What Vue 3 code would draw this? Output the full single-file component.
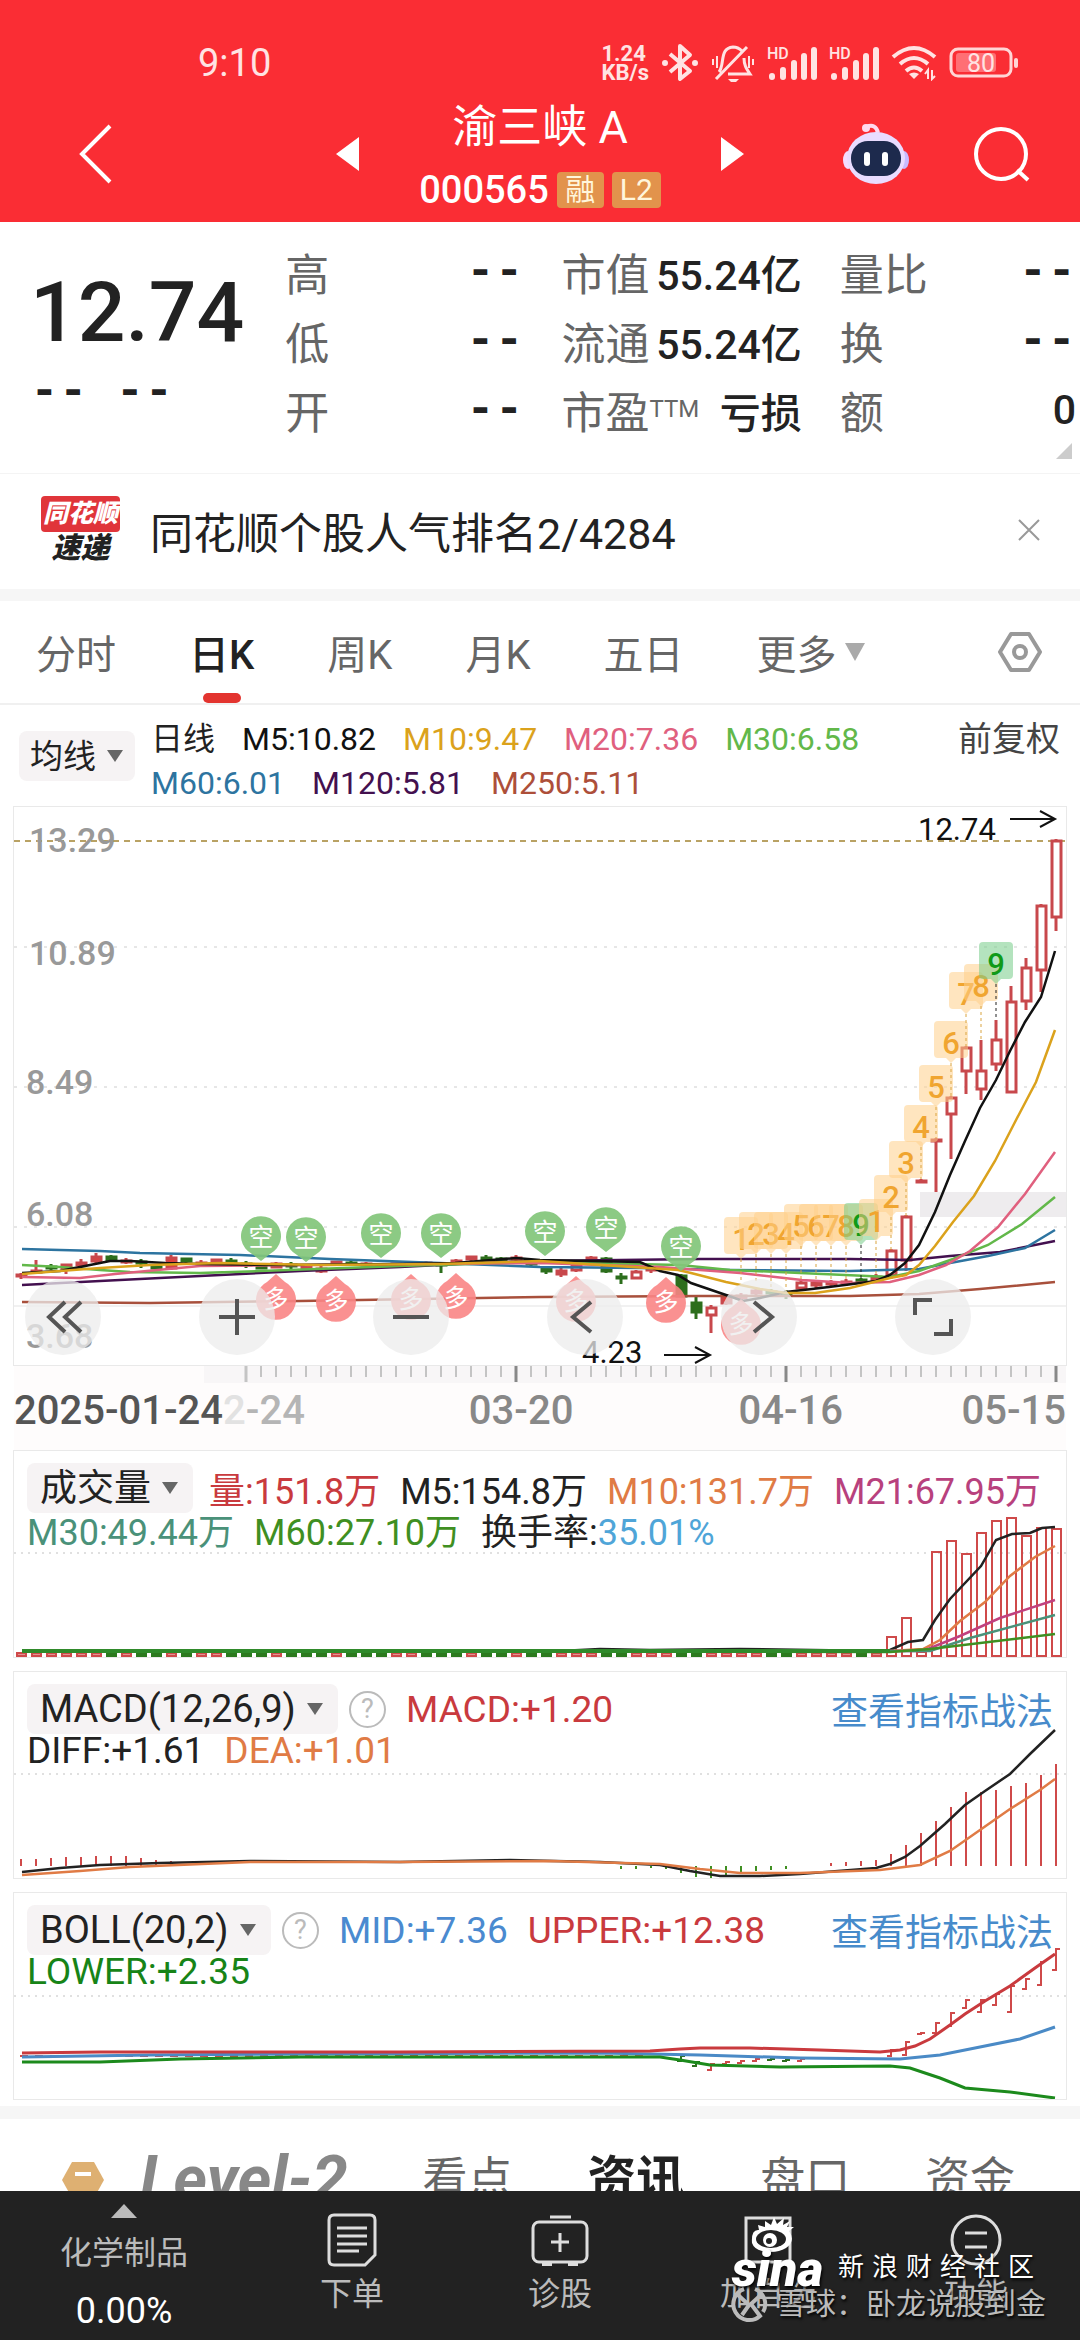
<script setup>
import { ref } from 'vue';

/**
 * Rows of the quote header, grouped by column.
 */
const quoteColumns = [
  [
    { label: '高', value: '--' },
    { label: '低', value: '--' },
    { label: '开', value: '--' },
  ],
  [
    { label: '市值', value: '55.24亿' },
    { label: '流通', value: '55.24亿' },
    { label: '市盈', sup: 'TTM', value: '亏损' },
  ],
  [
    { label: '量比', value: '--' },
    { label: '换', value: '--' },
    { label: '额', value: '0' },
  ],
];

const periods = ['分时', '日K', '周K', '月K', '五日'];
const activePeriod = ref('日K');

const maValues = [
  [
    { text: '日线', color: '#222222' },
    { text: 'M5:10.82', color: '#111111' },
    { text: 'M10:9.47', color: '#dba21c' },
    { text: 'M20:7.36', color: '#e0607e' },
    { text: 'M30:6.58', color: '#62b84a' },
  ],
  [
    { text: 'M60:6.01', color: '#2d74a0' },
    { text: 'M120:5.81', color: '#43104f' },
    { text: 'M250:5.11', color: '#ad4f3a' },
  ],
];

// x position of a trading day, 70 days are drawn
const dayX = (index) => 21 + index * 15;

/**
 * Candles as [day, open/close top, open/close bottom, high, low, kind].
 * kind: r = hollow red, f = filled red, g = filled green
 */
const candles = [
  [0, 1274, 1277, 1273, 1279, 'f'], [1, 1270, 1273, 1260, 1273, 'f'], [2, 1266, 1268, 1264, 1270, 'g'],
  [3, 1264, 1269, 1264, 1274, 'f'], [4, 1262, 1266, 1259, 1267, 'f'], [5, 1256, 1262, 1253, 1263, 'f'],
  [6, 1256, 1261, 1255, 1262, 'g'], [7, 1260, 1262, 1258, 1264, 'f'], [8, 1261, 1264, 1259, 1268, 'g'],
  [9, 1266, 1269, 1265, 1269, 'g'], [10, 1257, 1269, 1255, 1270, 'f'], [11, 1258, 1262, 1258, 1263, 'g'],
  [12, 1262, 1264, 1260, 1265, 'f'], [13, 1259, 1263, 1259, 1264, 'f'], [14, 1260, 1262, 1258, 1263, 'g'],
  [15, 1263, 1264, 1261, 1268, 'g'], [16, 1266, 1269, 1265, 1269, 'g'], [17, 1263, 1268, 1262, 1268, 'f'],
  [18, 1264, 1266, 1262, 1269, 'g'], [19, 1266, 1268, 1264, 1269, 'f'], [20, 1268, 1272, 1266, 1273, 'f'],
  [21, 1261, 1263, 1261, 1264, 'f'], [22, 1262, 1264, 1260, 1265, 'g'], [23, 1263, 1265, 1262, 1266, 'f'],
  [24, 1264, 1266, 1263, 1267, 'f'], [25, 1263, 1266, 1263, 1267, 'f'], [26, 1262, 1265, 1261, 1266, 'g'],
  [27, 1262, 1264, 1261, 1265, 'f'], [28, 1263, 1266, 1262, 1273, 'g'], [29, 1260, 1263, 1259, 1264, 'f'],
  [30, 1256, 1260, 1256, 1261, 'f'], [31, 1257, 1259, 1255, 1260, 'g'], [32, 1258, 1260, 1257, 1261, 'g'],
  [33, 1257, 1260, 1255, 1261, 'f'], [34, 1261, 1265, 1260, 1266, 'g'], [35, 1268, 1272, 1267, 1274, 'g'],
  [36, 1270, 1275, 1268, 1277, 'f'], [37, 1265, 1271, 1264, 1272, 'r'], [38, 1257, 1261, 1256, 1262, 'f'],
  [39, 1258, 1272, 1257, 1273, 'g'], [40, 1276, 1278, 1273, 1284, 'g'], [41, 1271, 1279, 1270, 1279, 'r'],
  [42, 1268, 1271, 1267, 1273, 'f'], [44, 1275, 1297, 1274, 1297, 'g'], [45, 1302, 1313, 1297, 1319, 'g'],
  [46, 1307, 1316, 1305, 1333, 'r'], [47, 1295, 1304, 1294, 1305, 'f'], [48, 1295, 1299, 1293, 1300, 'f'],
  [49, 1290, 1294, 1289, 1296, 'f'], [50, 1291, 1294, 1289, 1295, 'g'], [51, 1293, 1296, 1290, 1299, 'g'],
  [52, 1282, 1289, 1281, 1290, 'r'], [53, 1282, 1286, 1280, 1289, 'f'], [54, 1282, 1285, 1280, 1287, 'f'],
  [55, 1281, 1284, 1279, 1286, 'f'], [56, 1279, 1282, 1278, 1284, 'g'], [57, 1276, 1281, 1274, 1282, 'f'],
  [58, 1250, 1276, 1249, 1279, 'r'], [59, 1216, 1261, 1215, 1271, 'r'], [60, 1180, 1182, 1179, 1183, 'f'],
  [61, 1139, 1141, 1138, 1192, 'f'], [62, 1097, 1115, 1096, 1159, 'r'], [63, 1047, 1072, 1046, 1094, 'r'],
  [64, 1070, 1090, 1040, 1100, 'r'], [65, 1039, 1065, 1020, 1071, 'r'], [66, 1001, 1093, 986, 1093, 'r'],
  [67, 967, 1002, 958, 1010, 'r'], [68, 905, 971, 904, 992, 'r'], [69, 840, 918, 839, 931, 'r'],
];

const priceLabels = [
  { text: '13.29', x: 29, y: 852 },
  { text: '10.89', x: 29, y: 965 },
  { text: '8.49', x: 26, y: 1094 },
  { text: '6.08', x: 26, y: 1226 },
  { text: '3.68', x: 26, y: 1348 },
];

const priceLines = [
  { color: '#a8503c', points: '22,1302 150,1303 300,1301 540,1297 700,1296 850,1296 919,1294 980,1289 1055,1282' },
  { color: '#43104f', points: '22,1285 100,1281 200,1276 300,1271 400,1267 500,1262 540,1261 700,1259 850,1259 910,1260 950,1256 1000,1252 1055,1241' },
  { color: '#2d74a0', points: '22,1249 60,1250 100,1251 140,1253 240,1255 330,1259 440,1263 540,1267 640,1268 730,1270 850,1271 919,1269 950,1263 988,1256 1025,1248 1055,1230' },
  { color: '#62b84a', points: '22,1265 60,1267 100,1270 130,1272 200,1273 260,1271 400,1266 540,1262 680,1265 730,1270 800,1273 890,1277 919,1271 953,1259 988,1245 1022,1224 1055,1197' },
  { color: '#e0607e', points: '22,1277 80,1278 115,1274 200,1266 540,1263 660,1267 740,1273 802,1280 850,1283 890,1282 919,1275 946,1265 970,1251 998,1227 1025,1194 1055,1152' },
  { color: '#111111', points: '22,1273 60,1271 85,1266 110,1261 130,1261 165,1263 200,1264 280,1265 400,1264 455,1263 516,1258 540,1260 640,1262 660,1271 678,1275 691,1283 726,1295 743,1301 760,1298 786,1292 829,1287 876,1281 890,1275 905,1263 919,1245 935,1212 950,1175 965,1141 980,1108 996,1080 1010,1051 1025,1022 1041,997 1055,951' },
  { color: '#dba21c', points: '22,1274 60,1271 100,1268 150,1265 220,1263 320,1265 440,1264 540,1261 678,1270 691,1273 726,1282 760,1289 786,1293 815,1293 850,1288 890,1278 906,1275 919,1265 935,1246 953,1222 974,1196 995,1161 1015,1122 1036,1082 1055,1030' },
];

// sell (空) markers hang above the price, buy (多) markers below it
const sellMarks = [[261, 1237], [306, 1238], [381, 1234], [441, 1234], [545, 1232], [606, 1228], [681, 1247]];
const buyMarks = [[276, 1299], [336, 1301], [411, 1299], [456, 1298], [576, 1301], [666, 1302], [741, 1324]];

/**
 * Nine-turn counters: number, centre x, top of the tag, end of the dotted stem.
 */
const counters = [
  [1, 741, 1217, 1281], [2, 756, 1212, 1284], [3, 771, 1212, 1289], [4, 786, 1212, 1296],
  [5, 801, 1204, 1281], [6, 816, 1204, 1281], [7, 831, 1204, 1281], [8, 846, 1204, 1280],
  [9, 861, 1203, 1279], [1, 876, 1199, 1276], [2, 891, 1175, 1250], [3, 906, 1141, 1216],
  [4, 921, 1105, 1179], [5, 936, 1065, 1138], [6, 951, 1021, 1096], [7, 966, 972, 1046],
  [8, 981, 964, 1040], [9, 996, 942, 1020],
];

const chartTools = [
  { label: '更早', path: 'M40 23 24 38 40 53M56 23 40 38 56 53' },
  { label: '放大', path: 'M20 38H56M38 20V56' },
  { label: '缩小', path: 'M20 38H56' },
  { label: '左移', path: 'M44 23 26 38 44 53' },
  { label: '右移', path: 'M33 23 51 38 33 53' },
  { label: '全屏', path: 'M20 36V21H37M56 40V55H39' },
];

const dates = ['03-20', '04-16', '05-15'];

const volumeBars = Array.from({ length: 70 }, (_, day) => {
  const tall = { 58: 1638, 59: 1619, 60: 1653, 61: 1553, 62: 1542, 63: 1555, 64: 1534, 65: 1522, 66: 1519, 67: 1537, 68: 1529, 69: 1530 };
  const green = [6, 8, 9, 11, 14, 15, 16, 18, 19, 20, 22, 23, 24, 27, 28, 29, 31, 32, 34, 35, 39, 40, 44, 45, 50, 51, 56];
  return { day, top: tall[day] || 1654, color: green.includes(day) ? '#2c7a1e' : '#cf4a4a', tall: day > 57 };
});

const volumeLines = [
  { color: '#222222', points: '22,1652 560,1652 600,1650 650,1651 740,1650 880,1652 890,1651 908,1643 923,1641 935,1621 950,1600 981,1567 996,1541 1012,1535 1030,1534 1042,1529 1055,1528' },
  { color: '#e07b45', points: '22,1652 890,1652 923,1650 940,1641 960,1622 985,1603 1010,1577 1035,1558 1055,1547' },
  { color: '#c0417f', points: '22,1652 923,1652 960,1637 1000,1619 1055,1601' },
  { color: '#4a9179', points: '22,1652 930,1652 970,1639 1055,1616' },
  { color: '#3f8f22', points: '22,1652 890,1653 930,1650 1055,1635' },
];

// MACD columns as [day, y end], zero axis at 1867
const macdBars = [
  [0, 1860], [1, 1860], [2, 1859], [3, 1858], [4, 1858], [5, 1857], [6, 1857], [7, 1857], [8, 1859], [9, 1861], [10, 1862],
  [40, 1870], [41, 1870], [42, 1869], [43, 1870], [44, 1874], [45, 1878], [46, 1879], [47, 1878], [48, 1875], [49, 1872], [50, 1871], [51, 1870],
  [54, 1864], [55, 1863], [56, 1862], [57, 1861], [58, 1855], [59, 1846], [60, 1834], [61, 1822], [62, 1808],
  [63, 1793], [64, 1793], [65, 1791], [66, 1787], [67, 1784], [68, 1776], [69, 1765],
];

const macdLines = [
  { color: '#222222', points: '22,1873 60,1869 100,1866 160,1864 250,1862 400,1863 510,1861 600,1863 660,1866 690,1872 720,1877 760,1877 800,1875 876,1869 890,1865 905,1858 920,1847 945,1825 965,1806 985,1792 1010,1775 1030,1755 1055,1731' },
  { color: '#e07b45', points: '22,1876 80,1872 130,1868 250,1863 400,1863 550,1862 660,1865 700,1870 740,1874 800,1874 880,1871 920,1866 950,1852 980,1831 1010,1810 1040,1791 1055,1780' },
];

const bollBars = [
  [44, 2057, 2063, 'g'], [45, 2063, 2068, 'g'], [46, 2065, 2072, 'r'], [47, 2063, 2066, 'r'], [48, 2062, 2065, 'r'],
  [49, 2060, 2063, 'r'], [50, 2060, 2062, 'g'], [51, 2061, 2063, 'g'], [52, 2060, 2063, 'r'],
  [58, 2051, 2058, 'r'], [59, 2043, 2057, 'r'], [60, 2034, 2036, 'r'], [61, 2024, 2035, 'r'], [62, 2014, 2028, 'r'],
  [63, 2001, 2010, 'r'], [64, 2001, 2014, 'r'], [65, 1995, 2007, 'r'], [66, 1987, 2014, 'r'], [67, 1980, 1991, 'r'],
  [68, 1963, 1987, 'r'], [69, 1950, 1972, 'r'],
];

const bollLines = [
  { color: '#4a8ac6', points: '22,2058 150,2056 300,2055 600,2054 700,2056 800,2059 900,2060 940,2056 980,2048 1020,2040 1055,2028' },
  { color: '#c93a3e', points: '22,2054 100,2053 400,2053 650,2052 680,2050 700,2049 750,2049 820,2051 880,2053 900,2051 915,2047 930,2040 950,2026 965,2015 985,2002 1010,1987 1035,1969 1055,1955' },
  { color: '#1c8a1c', points: '22,2063 100,2063 180,2060 300,2058 660,2058 680,2061 710,2066 780,2068 890,2067 910,2069 940,2079 965,2089 1010,2093 1040,2097 1055,2099' },
];

const watermark = ['新', '浪', '财', '经', '社', '区'];
</script>

<template>
  <div class="app">
    <header class="header">
      <div class="status-bar">
        <span class="time">9:10</span>
        <div class="status-icons">
          <span class="speed">1.24<br>KB/s</span>
          <svg width="38" height="40" viewBox="0 0 38 40" fill="none" stroke="#ffe3e3" stroke-width="4">
            <path d="M9 11 29 28 19 36V3L29 12 9 29" stroke-linejoin="round" />
            <circle cx="4" cy="20" r="2" fill="#ffe3e3" stroke-width="2" />
            <circle cx="34" cy="20" r="2" fill="#ffe3e3" stroke-width="2" />
          </svg>
          <svg width="44" height="40" viewBox="0 0 44 40" fill="none" stroke="#ffe3e3" stroke-width="3">
            <path d="M8 29C14 22 8 5 22 4 27 4 29 6 31 8M33 15C33 22 35 25 39 31H17M5 36 36 4" />
            <path d="M17 36H28L25 39H20Z" fill="#ffe3e3" stroke="none" />
            <path d="M6 13V25M2 16V22M38 13V25M42 16V22" stroke-width="2" />
          </svg>
          <svg v-for="sim in 2" :key="sim" width="50" height="36" viewBox="0 0 50 36">
            <text x="0" y="14" font-size="16" font-weight="500" fill="#ffe3e3">HD</text>
            <path d="M5 31V32M16 25V32M27 18V32M37 11V32M47 5V32" stroke="#ffe3e3" stroke-width="6" stroke-linecap="round" />
          </svg>
          <svg width="46" height="36" viewBox="0 0 46 36" fill="none" stroke="#ffe3e3" stroke-width="4">
            <path d="M2 12Q23-6 44 12M9 19Q23 7 37 19M15 26Q23 19 31 26" />
            <path d="M18 29 23 34 28 29Q23 26 18 29Z" fill="#ffe3e3" stroke="none" />
            <path d="M37 34V25L34 29M41 25V34L44 31" stroke-width="2" />
          </svg>
          <svg width="70" height="32" viewBox="0 0 70 32">
            <rect x="2" y="2" width="60" height="27" rx="7" fill="none" stroke="#ffd6d6" stroke-width="3" />
            <rect x="7" y="6" width="40" height="19" rx="3" fill="#ff6f74" />
            <rect x="65" y="11" width="4" height="10" rx="2" fill="#ffd6d6" />
            <text x="32" y="25" font-size="25" text-anchor="middle" fill="#ffe3e3">80</text>
          </svg>
        </div>
      </div>
      <div class="title-bar">
        <button class="icon-button back" aria-label="返回">
          <svg width="34" height="60" viewBox="0 0 34 60"><path d="M31 2 3 30 31 58" fill="none" stroke="#fff" stroke-width="4" /></svg>
        </button>
        <div class="stock-switch">
          <button class="icon-button" aria-label="上一只">
            <svg width="23" height="34" viewBox="0 0 23 34"><path d="M23 0V34L0 17Z" fill="#fff" /></svg>
          </button>
          <div class="stock">
            <h1>渝三峡 A</h1>
            <p class="code">000565 <span class="badge">融</span><span class="badge">L2</span></p>
          </div>
          <button class="icon-button" aria-label="下一只">
            <svg width="23" height="34" viewBox="0 0 23 34"><path d="M0 0V34L23 17Z" fill="#fff" /></svg>
          </button>
        </div>
        <div class="title-actions">
          <button class="icon-button" aria-label="智能助手">
            <svg width="68" height="62" viewBox="0 0 68 62">
              <path d="M24 4Q34 0 36 10" fill="none" stroke="#ffd9ee" stroke-width="4" />
              <circle cx="24" cy="5" r="4" fill="#ffd9ee" />
              <ellipse cx="6" cy="37" rx="5" ry="9" fill="#f4dcff" />
              <ellipse cx="62" cy="37" rx="5" ry="9" fill="#c9baff" />
              <ellipse cx="34" cy="35" rx="29" ry="26" fill="#e9dcff" />
              <rect x="9" y="18" width="50" height="35" rx="17" fill="#1d2a4d" />
              <rect x="22" y="29" width="6" height="14" rx="3" fill="#fff" />
              <rect x="40" y="29" width="6" height="14" rx="3" fill="#fff" />
            </svg>
          </button>
          <button class="icon-button" aria-label="搜索">
            <svg width="56" height="56" viewBox="0 0 56 56" fill="none" stroke="#fff" stroke-width="4">
              <circle cx="27" cy="28" r="25" /><path d="M43 44 54 54" />
            </svg>
          </button>
        </div>
      </div>
    </header>

    <main class="content">
      <section class="quote">
        <div class="price">
          <strong>12.74</strong>
          <p class="change"><span class="dash">--</span><span class="dash">--</span></p>
        </div>
        <dl v-for="(column, index) in quoteColumns" :key="index" class="quote-column">
          <div v-for="item in column" :key="item.label" class="quote-row">
            <dt>{{ item.label }}<sup v-if="item.sup">{{ item.sup }}</sup></dt>
            <dd :class="{ dash: item.value === '--' }">{{ item.value }}</dd>
          </div>
        </dl>
        <svg class="corner" width="16" height="16" viewBox="0 0 16 16"><path d="M16 0V16H0Z" fill="#cccccc" /></svg>
      </section>

      <section class="news">
        <div class="news-logo">
          <span class="logo-top">同花顺</span>
          <span class="logo-bottom">速递</span>
        </div>
        <p>同花顺个股人气排名2/4284</p>
        <button class="icon-button" aria-label="关闭">
          <svg width="24" height="24" viewBox="0 0 24 24"><path d="M2 2 22 22M22 2 2 22" stroke="#999" stroke-width="2" /></svg>
        </button>
      </section>

      <nav class="periods">
        <button
          v-for="period in periods"
          :key="period"
          :class="['period', { active: period === activePeriod }]"
          @click="activePeriod = period"
        >{{ period }}</button>
        <button class="period more">更多
          <svg width="20" height="18" viewBox="0 0 20 18"><path d="M0 0H20L10 18Z" fill="#aaa" /></svg>
        </button>
        <button class="icon-button settings" aria-label="设置">
          <svg width="44" height="42" viewBox="0 0 44 42" fill="none" stroke="#999" stroke-width="4">
            <path d="M13 3H31L42 21 31 39H13L2 21Z" stroke-linejoin="round" /><circle cx="22" cy="21" r="6" />
          </svg>
        </button>
      </nav>

      <section class="ma-legend">
        <label class="picker small">
          <select aria-label="主图指标"><option>均线</option></select>
          <svg width="16" height="12" viewBox="0 0 16 12"><path d="M0 0H16L8 12Z" fill="#666" /></svg>
        </label>
        <div class="ma-rows">
          <p v-for="(row, index) in maValues" :key="index">
            <span v-for="ma in row" :key="ma.text" :style="{ color: ma.color }">{{ ma.text }}</span>
          </p>
        </div>
        <button class="adjust">前复权</button>
      </section>

      <section class="chart main-chart">
        <svg class="plot" viewBox="14 807 1052 558">
          <g stroke="#e6e6e6" stroke-width="2" stroke-dasharray="3 7">
            <path d="M14 947H1066M14 1087H1066M14 1227H1066" />
          </g>
          <path d="M14 1306H1066" stroke="#f1f1f1" stroke-width="2" />
          <rect x="920" y="1192" width="146" height="25" fill="#eeecee" />
          <path d="M14 841H1066" stroke="#b9a264" stroke-width="2" stroke-dasharray="6 5" />
          <text
            v-for="label in priceLabels"
            :key="label.text"
            :x="label.x"
            :y="label.y"
            font-size="34"
            font-weight="500"
            fill="#999"
          >{{ label.text }}</text>
          <g v-for="c in candles" :key="c[0]" :stroke="c[5] === 'g' ? '#2c6e1c' : '#c8484c'" stroke-width="3">
            <path :d="`M${dayX(c[0])} ${c[3]}V${c[1]}M${dayX(c[0])} ${c[2]}V${c[4]}`" />
            <rect
              :x="dayX(c[0]) - 4"
              :y="c[1] + 1"
              width="9"
              :height="Math.max(c[2] - c[1] - 2, 1)"
              :fill="c[5] === 'r' ? '#fff' : c[5] === 'g' ? '#2c6e1c' : '#e0403c'"
            />
          </g>
          <polyline v-for="line in priceLines" :key="line.color" :points="line.points" fill="none" :stroke="line.color" stroke-width="2.5" />
          <g v-for="[x, y] in sellMarks" :key="x" class="mark">
            <path :d="`M${x} ${y + 24}L${x - 9} ${y + 17}A20 20 0 1 1 ${x + 9} ${y + 17}Z`" fill="#82c57a" fill-opacity=".92" />
            <text :x="x" :y="y + 9" font-size="25">空</text>
          </g>
          <g v-for="[x, y] in buyMarks" :key="x" class="mark">
            <path :d="`M${x} ${y - 25}L${x + 9} ${y - 17}A20 20 0 1 1 ${x - 9} ${y - 17}Z`" fill="#f98585" fill-opacity=".9" />
            <text :x="x" :y="y + 9" font-size="25">多</text>
          </g>
          <g v-for="[num, x, y, end] in counters" :key="x">
            <path :d="`M${x} ${y + 42}V${end}`" :stroke="num === 9 ? '#222' : '#d9a441'" stroke-width="1" stroke-dasharray="3 3" />
            <path
              :d="`M${x - 13} ${y}h26q4 0 4 4v29q0 4-4 4h-8l-5 5-5-5h-8q-4 0-4-4v-29q0-4 4-4Z`"
              :fill="num === 9 ? '#77cc88' : '#ffcf8a'"
              fill-opacity=".55"
            />
            <text :x="x" :y="y + 33" font-size="31" font-weight="500" text-anchor="middle" :fill="num === 9 ? '#109a18' : '#f0a530'">{{ num }}</text>
          </g>
          <text x="918" y="840" font-size="31" fill="#111">12.74</text>
          <text x="582" y="1363" font-size="31" fill="#111">4.23</text>
          <path d="M1010 819H1055M1040 811 1055 819 1040 827M664 1355H710M695 1347 710 1355 695 1363" fill="none" stroke="#111" stroke-width="2" />
        </svg>
        <div class="chart-tools">
          <button v-for="tool in chartTools" :key="tool.label" :aria-label="tool.label">
            <svg width="76" height="76" viewBox="0 0 76 76"><path :d="tool.path" fill="none" stroke="#555" stroke-width="4" /></svg>
          </button>
        </div>
      </section>

      <div class="timeline">
        <svg class="plot" viewBox="14 0 1052 17">
          <rect x="204" y="0" width="862" height="17" fill="#f8f6f7" />
          <path
            v-for="tick in 55"
            :key="tick"
            :d="`M${dayX(tick + 14)} 0V${tick % 18 === 1 ? 16 : 11}`"
            :stroke="tick % 18 === 1 && tick > 1 ? '#888' : '#c4c4c4'"
            :stroke-width="tick % 18 === 1 ? 3 : 2"
          />
        </svg>
        <div class="dates">
          <span class="first-date">2025-01-24</span>
          <span class="faded-date"><span class="ghost">2</span>-24</span>
          <span v-for="date in dates" :key="date">{{ date }}</span>
        </div>
      </div>

      <section class="chart indicator volume">
        <svg class="plot" viewBox="14 1452 1052 206">
          <path d="M14 1554H1066" stroke="#e0e0e0" stroke-width="2" stroke-dasharray="2 5" />
          <rect
            v-for="bar in volumeBars"
            :key="bar.day"
            :x="dayX(bar.day) - 4"
            :y="bar.top"
            width="9"
            :height="1657 - bar.top"
            :fill="bar.tall ? 'none' : bar.color"
            :fill-opacity="bar.color === '#2c7a1e' ? 1 : 0.6"
            :stroke="bar.color"
            stroke-width="2"
          />
          <polyline v-for="line in volumeLines" :key="line.color" :points="line.points" fill="none" :stroke="line.color" stroke-width="2.5" />
          <path d="M22 1652H890" stroke="#2f8a2a" stroke-width="4" />
        </svg>
        <div class="legend">
          <div class="legend-row">
            <label class="picker">
              <select aria-label="副图指标一"><option>成交量</option></select>
              <svg width="16" height="12" viewBox="0 0 16 12"><path d="M0 0H16L8 12Z" fill="#666" /></svg>
            </label>
            <span class="up">量:151.8万</span>
            <span class="dark">M5:154.8万</span>
            <span class="orange">M10:131.7万</span>
            <span class="magenta">M21:67.95万</span>
          </div>
          <div class="legend-row">
            <span class="teal">M30:49.44万</span>
            <span class="leaf">M60:27.10万</span>
            <span class="dark">换手率:<span class="sky">35.01%</span></span>
          </div>
        </div>
      </section>

      <section class="chart indicator">
        <svg class="plot" viewBox="14 1673 1052 206">
          <path d="M14 1775H1066" stroke="#e0e0e0" stroke-width="2" stroke-dasharray="2 5" />
          <path v-for="[day, end] in macdBars" :key="day" :d="`M${dayX(day)} 1867V${end}`" :stroke="end > 1867 ? '#3f8f22' : '#cf4a4a'" stroke-width="2" />
          <polyline v-for="line in macdLines" :key="line.color" :points="line.points" fill="none" :stroke="line.color" stroke-width="2.5" />
        </svg>
        <div class="legend">
          <div class="legend-row">
            <label class="picker">
              <select class="formula" aria-label="副图指标二"><option>MACD(12,26,9)</option></select>
              <svg width="16" height="12" viewBox="0 0 16 12"><path d="M0 0H16L8 12Z" fill="#666" /></svg>
            </label>
            <button class="help" aria-label="说明">?</button>
            <span class="up">MACD:+1.20</span>
            <a href="#" class="tactics">查看指标战法</a>
          </div>
          <div class="legend-row">
            <span class="dark">DIFF:+1.61</span>
            <span class="orange">DEA:+1.01</span>
          </div>
        </div>
      </section>

      <section class="chart indicator">
        <svg class="plot" viewBox="14 1894 1052 206">
          <path d="M14 1997H1066" stroke="#e0e0e0" stroke-width="2" stroke-dasharray="2 5" />
          <path d="M20 2057H650" stroke="#cf4a4a" stroke-width="2" stroke-dasharray="8 7" />
          <path
            v-for="[day, high, low, kind] in bollBars"
            :key="day"
            :d="`M${dayX(day) - 4} ${low - 1}H${dayX(day)}V${high}H${dayX(day) + 4}`"
            fill="none"
            :stroke="kind === 'g' ? '#2c6e1c' : '#cf4a4a'"
            stroke-width="2"
          />
          <polyline v-for="line in bollLines" :key="line.color" :points="line.points" fill="none" :stroke="line.color" stroke-width="3" />
        </svg>
        <div class="legend">
          <div class="legend-row">
            <label class="picker">
              <select class="formula" aria-label="副图指标三"><option>BOLL(20,2)</option></select>
              <svg width="16" height="12" viewBox="0 0 16 12"><path d="M0 0H16L8 12Z" fill="#666" /></svg>
            </label>
            <button class="help" aria-label="说明">?</button>
            <span class="blue">MID:+7.36</span>
            <span class="up">UPPER:+12.38</span>
            <a href="#" class="tactics">查看指标战法</a>
          </div>
          <div class="legend-row">
            <span class="green">LOWER:+2.35</span>
          </div>
        </div>
      </section>

      <nav class="info-tabs">
        <a href="#" class="level">
          <svg width="42" height="36" viewBox="0 0 42 36">
            <path d="M10 0H32L42 18 32 36H10L0 18Z" fill="#deb072" /><path d="M13 12H29" stroke="#fff" stroke-width="4" />
          </svg>
          Level-2
        </a>
        <a href="#">看点</a>
        <a href="#" class="current">资讯</a>
        <a href="#">盘口</a>
        <a href="#">资金</a>
      </nav>
    </main>

    <footer class="bottom-bar">
      <button class="sector">
        <svg width="26" height="14" viewBox="0 0 26 14"><path d="M0 14H26L13 0Z" fill="#bbb" /></svg>
        <span>化学制品</span>
        <strong>0.00%</strong>
      </button>
      <button>
        <svg width="50" height="54" viewBox="0 0 50 54" fill="none" stroke="#ddd" stroke-width="3">
          <path d="M7 2H43Q48 2 48 7V42L38 52H7Q2 52 2 47V7Q2 2 7 2ZM10 15H40M10 23H40M10 31H40M10 38H32" />
        </svg>
        <span>下单</span>
      </button>
      <button>
        <svg width="58" height="54" viewBox="0 0 58 54" fill="none" stroke="#ddd" stroke-width="3">
          <rect x="2" y="9" width="54" height="40" rx="6" /><path d="M19 4H40M29 20V39M20 29H38" /><path d="M11 51H21M37 51H47" stroke-width="4" />
        </svg>
        <span>诊股</span>
      </button>
      <button>
        <svg width="50" height="54" viewBox="0 0 50 54" fill="none" stroke="#ddd" stroke-width="3">
          <rect x="3" y="5" width="44" height="44" /><path d="M25 16V38M14 27H36" />
        </svg>
        <span>加自选</span>
      </button>
      <button>
        <svg width="54" height="54" viewBox="0 0 54 54" fill="none" stroke="#ddd" stroke-width="3">
          <circle cx="27" cy="27" r="24" /><path d="M16 20H38M16 34H38" />
        </svg>
        <span>功能</span>
      </button>

      <div class="watermarks">
        <div class="sina">
          <div class="sina-logo">
            <svg width="46" height="36" viewBox="0 0 46 36">
              <path d="M2 26Q1 12 9 13L8 8 15 10 15 4 21 8 24 0 27 7 34 1 33 8 40 4 37 10 44 10 39 14Q46 24 36 31 26 37 12 34 4 32 2 26Z" fill="#fff" />
              <ellipse cx="21" cy="22" rx="15" ry="9" fill="#222" />
              <circle cx="20" cy="23" r="7" fill="#fff" />
              <circle cx="19" cy="24" r="3" fill="#222" />
            </svg>
            <b>sina</b>
          </div>
          <span v-for="char in watermark" :key="char" class="char">{{ char }}</span>
        </div>
        <div class="xueqiu">
          <svg width="38" height="38" viewBox="0 0 38 38" fill="none" stroke="#bbb" stroke-width="4">
            <path d="M14 4A16 16 0 1 0 30 31L21 19 33 8M25 4A16 16 0 0 1 33 27M8 10 19 20 12 30" />
          </svg>
          <span>雪球：卧龙说股到金</span>
        </div>
      </div>
    </footer>
  </div>
</template>

<style>
  body {
    margin: 0;
    background-color: #fff;
  }
</style>

<style scoped>
  .app {
    display: flex;
    flex-direction: column;
    width: 100%;
    height: 100vh;
    overflow: hidden;
    font-family: Roboto, "Noto Sans CJK SC", sans-serif;
    color: #222;
    background-color: #fff;
  }

  h1, p, dl, dd {
    margin: 0;
  }

  button {
    padding: 0;
    border: 0;
    background: none;
    font-family: inherit;
    color: inherit;
  }

  svg {
    display: block;
    flex: none;
  }

  .icon-button {
    display: flex;
  }

  .header {
    flex: none;
    background-color: #fa2d34;
    color: #fff;
  }

  .status-bar {
    display: flex;
    justify-content: space-between;
    align-items: center;
    height: 46px;
    padding: 40px 61px 0 198px;
    color: #ffe3e3;
  }

  .time {
    font-size: 38px;
  }

  .status-icons {
    display: flex;
    align-items: center;
    gap: 12px;
  }

  .speed {
    font-size: 22px;
    line-height: 19px;
    font-weight: 700;
  }

  .title-bar {
    display: grid;
    grid-template-columns: 1fr 408px 1fr;
    align-items: center;
    height: 136px;
  }

  .back {
    margin-left: 79px;
  }

  .stock-switch {
    display: flex;
    justify-content: space-between;
    align-items: center;
  }

  .stock {
    padding-top: 10px;
    text-align: center;
  }

  h1 {
    font-size: 45px;
    line-height: 62px;
    font-weight: 400;
  }

  .code {
    display: flex;
    align-items: center;
    gap: 8px;
    font-size: 38px;
    line-height: 62px;
    font-weight: 500;
  }

  .badge {
    box-sizing: border-box;
    min-width: 47px;
    padding: 0 8px;
    border-radius: 4px;
    background-color: #e2934c;
    font-size: 30px;
    line-height: 36px;
    font-weight: 400;
    color: #fff6dc;
    text-align: center;
  }

  .title-actions {
    display: flex;
    justify-content: flex-end;
    align-items: center;
    gap: 64px;
    padding-right: 50px;
  }

  .content {
    flex: 1;
    min-height: 0;
    overflow: hidden;
  }

  .quote {
    position: relative;
    display: grid;
    grid-template-columns: 247fr 238fr 240fr 236fr;
    column-gap: 38px;
    padding: 15px 4px 29px 0;
    border-bottom: 1px solid #f4f4f4;
  }

  .price {
    padding: 24px 0 0 30px;
  }

  .price strong {
    display: block;
    font-size: 84px;
    line-height: 104px;
    font-weight: 500;
  }

  .change {
    display: flex;
    gap: 28px;
    padding-top: 4px;
  }

  .quote-row {
    display: flex;
    justify-content: space-between;
    align-items: center;
    height: 69px;
    white-space: nowrap;
  }

  dt {
    font-size: 44px;
    color: #666;
  }

  sup {
    font-size: 24px;
    line-height: 24px;
    vertical-align: 12px;
  }

  dd {
    font-size: 41px;
    font-weight: 500;
    color: #222;
  }

  .dash {
    font-family: "Liberation Mono", monospace;
    font-size: 48px;
    line-height: 46px;
    font-weight: 700;
  }

  .corner {
    position: absolute;
    right: 8px;
    bottom: 14px;
  }

  .news {
    display: flex;
    align-items: center;
    height: 111px;
    padding: 0 39px 4px;
    border-bottom: 12px solid #f6f6f6;
  }

  .news p {
    flex: 1;
    margin-left: 28px;
    font-size: 43px;
  }

  .news-logo {
    display: flex;
    flex-direction: column;
    align-items: center;
    width: 83px;
    font-weight: 900;
    font-style: italic;
  }

  .logo-top {
    width: 79px;
    border-radius: 4px;
    background-color: #e0353a;
    font-size: 25px;
    line-height: 36px;
    color: #fff;
    text-align: center;
  }

  .logo-bottom {
    font-size: 29px;
    line-height: 32px;
  }

  .periods {
    display: flex;
    align-items: stretch;
    gap: 73px;
    height: 102px;
    padding: 0 38px 0 36px;
    border-bottom: 2px solid #f0f0f0;
  }

  .period {
    position: relative;
    display: flex;
    align-items: center;
    font-size: 40px;
    color: #666;
  }

  .period.active {
    color: #222;
    font-weight: 500;
  }

  .period.active::after {
    content: "";
    position: absolute;
    bottom: 0;
    left: 50%;
    width: 38px;
    height: 10px;
    margin-left: -19px;
    border-radius: 5px;
    background-color: #e3342f;
  }

  .more {
    gap: 8px;
  }

  .settings {
    align-items: center;
    margin-left: auto;
  }

  .ma-legend {
    display: flex;
    align-items: flex-start;
    height: 89px;
    padding: 12px 20px 0 19px;
  }

  .ma-rows {
    flex: 1;
    margin-left: 16px;
    font-size: 32px;
    line-height: 44px;
  }

  .ma-rows p {
    display: flex;
    gap: 27px;
  }

  .adjust {
    font-size: 34px;
    line-height: 44px;
    color: #444;
  }

  .picker {
    display: flex;
    align-items: center;
    gap: 11px;
    height: 50px;
    padding: 0 15px 0 13px;
    border-radius: 8px;
    background-color: #f6f3f4;
  }

  .picker.small {
    margin-top: 14px;
    padding: 0 12px 0 11px;
  }

  select {
    padding: 0;
    border: 0;
    background: none;
    appearance: none;
    font-family: inherit;
    font-size: 37px;
    color: #222;
  }

  select.formula {
    font-size: 38px;
  }

  .small select {
    font-size: 33px;
  }

  .chart {
    position: relative;
    margin: 0 13px;
    border: 1px solid #e9e9e9;
  }

  .plot {
    width: 100%;
    height: auto;
  }

  .mark {
    fill: #fff;
    text-anchor: middle;
  }

  .chart-tools {
    position: absolute;
    left: 11px;
    bottom: 10px;
    display: flex;
    gap: 98px;
  }

  .chart-tools button {
    border-radius: 50%;
    background-color: rgba(236, 236, 236, 0.75);
  }

  .timeline {
    margin: 0 14px;
    background-color: #fefcfc;
  }

  .dates {
    display: grid;
    grid-template-columns: 204fr 247fr 271fr 224fr auto;
    height: 67px;
    font-size: 40px;
    line-height: 56px;
    font-weight: 500;
    color: #888;
    white-space: nowrap;
  }

  .first-date {
    color: #555;
  }

  .faded-date {
    color: #b5b5b5;
  }

  .ghost {
    color: #e2e2e2;
  }

  .indicator {
    margin-bottom: 13px;
  }

  .legend {
    position: absolute;
    top: 12px;
    left: 13px;
    right: 13px;
    font-size: 37px;
  }

  .volume .legend {
    font-size: 36px;
  }

  .legend-row {
    display: flex;
    align-items: center;
    gap: 20px;
    height: 42px;
    margin-top: -5px;
    white-space: nowrap;
  }

  .legend-row:first-child {
    height: 50px;
    margin-top: 0;
  }

  .volume .picker {
    margin-right: -4px;
  }

  .help {
    width: 37px;
    height: 37px;
    margin-left: -9px;
    border: 2px solid #bbb;
    border-radius: 50%;
    font-size: 27px;
    line-height: 32px;
    color: #bbb;
  }

  .tactics {
    margin-left: auto;
    color: #478bcb;
    text-decoration: none;
  }

  .up {
    color: #c93a3e;
  }

  .dark {
    color: #222;
  }

  .orange {
    color: #e07b45;
  }

  .magenta {
    color: #b8417d;
  }

  .teal {
    color: #4a9179;
  }

  .leaf {
    color: #3f8f22;
  }

  .sky {
    color: #4fa5d8;
  }

  .blue {
    color: #4a8ad0;
  }

  .green {
    color: #178417;
  }

  .info-tabs {
    display: flex;
    justify-content: space-between;
    align-items: center;
    margin-top: -7px;
    padding: 28px 65px 0 62px;
    border-top: 13px solid #f6f6f6;
    font-size: 45px;
    line-height: 66px;
  }

  .info-tabs a {
    color: #666;
    text-decoration: none;
  }

  .info-tabs .current {
    font-size: 49px;
    font-weight: 700;
    color: #222;
  }

  .info-tabs .level {
    display: flex;
    align-items: center;
    gap: 36px;
    font-size: 64px;
    font-weight: 700;
    font-style: italic;
    color: #888;
  }

  .bottom-bar {
    position: relative;
    flex: none;
    display: grid;
    grid-template-columns: 248fr repeat(4, 208fr);
    height: 149px;
    background-color: #222;
    color: #bbb;
  }

  .bottom-bar button {
    display: flex;
    flex-direction: column;
    align-items: center;
    gap: 4px;
    padding-top: 22px;
    font-size: 32px;
    line-height: 46px;
  }

  .bottom-bar .sector {
    gap: 12px;
    padding-top: 13px;
  }

  .sector strong {
    font-size: 36px;
    font-weight: 400;
    color: #fff;
  }

  .watermarks {
    position: absolute;
    right: 34px;
    bottom: 17px;
    text-shadow: 1px 2px 3px #000;
  }

  .sina {
    display: flex;
    align-items: flex-end;
    justify-content: flex-end;
    gap: 8px;
    padding-right: 12px;
    color: #fff;
  }

  .sina-logo {
    display: flex;
    flex-direction: column;
    width: 98px;
  }

  .sina-logo svg {
    margin-left: 18px;
  }

  .sina-logo b {
    font-size: 50px;
    line-height: 32px;
    font-style: italic;
    font-weight: 900;
  }

  .char {
    font-size: 26px;
    line-height: 36px;
  }

  .xueqiu {
    display: flex;
    align-items: center;
    gap: 8px;
    font-size: 30px;
    line-height: 38px;
    color: #bbb;
    white-space: nowrap;
  }
</style>
